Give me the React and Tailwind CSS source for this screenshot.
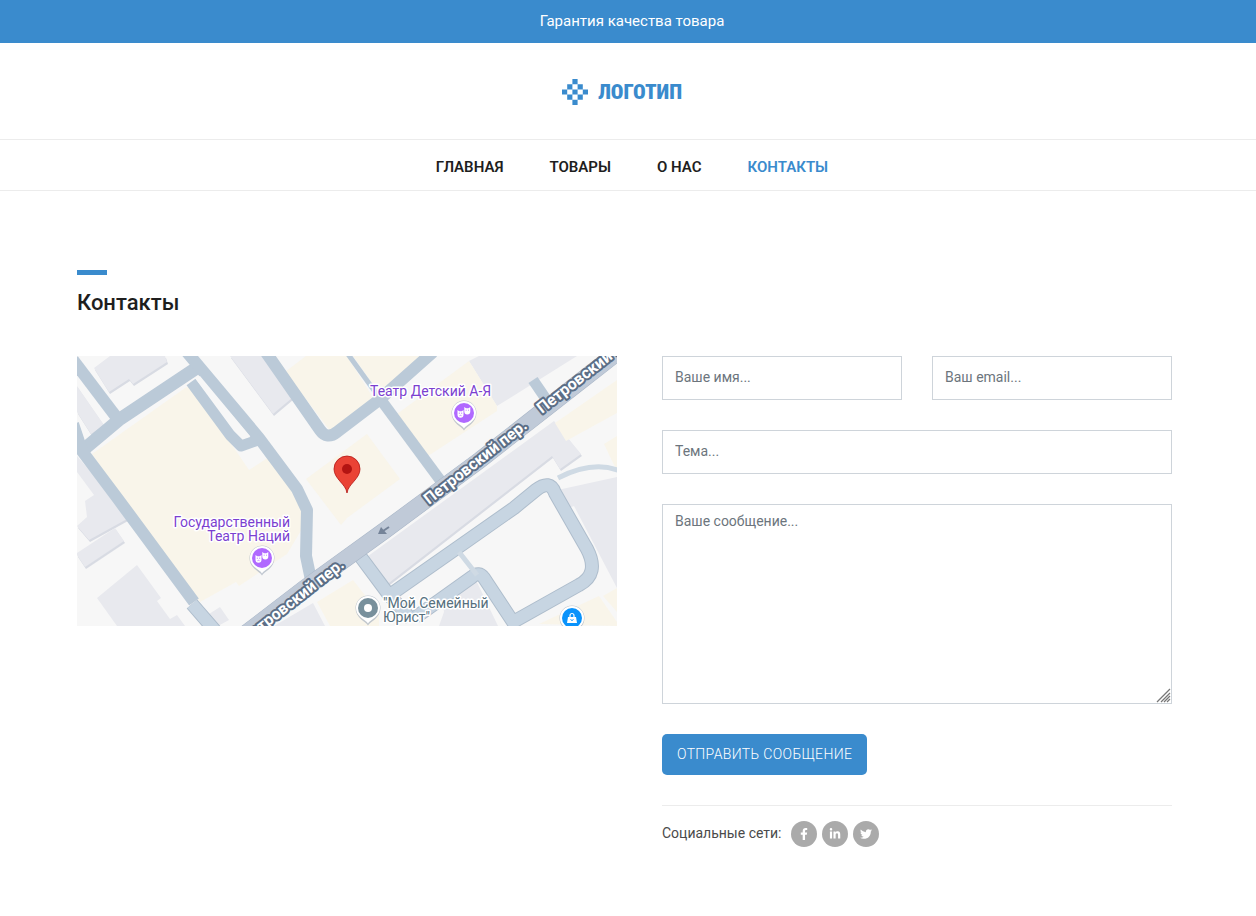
import { FaFacebookF, FaLinkedinIn, FaTwitter } from "react-icons/fa";

const navItems = [
    { label: "ГЛАВНАЯ", href: "#home" },
    { label: "ТОВАРЫ", href: "#products" },
    { label: "О НАС", href: "#about" },
    { label: "КОНТАКТЫ", href: "#contacts", active: true },
];

const socials = [
    { label: "Facebook", href: "#facebook", Icon: FaFacebookF },
    { label: "LinkedIn", href: "#linkedin", Icon: FaLinkedinIn },
    { label: "Twitter", href: "#twitter", Icon: FaTwitter },
];

const fieldClass =
    "block w-full border border-[#ced4da] bg-white px-3 text-sm text-[#495057] placeholder:text-[#6c757d] outline-none focus:border-[#3a8bcd]";

const LogoMark = () => (
    <svg viewBox="0 0 26 26" className="h-[26px] w-[26px]" fill="#3a8bcd" aria-hidden="true">
        <path d="M10.4 0h5.2v5.2h-5.2zM5.2 5.2h5.2v5.2H5.2zM15.6 5.2h5.2v5.2h-5.2zM0 10.4h5.2v5.2H0zM10.4 10.4h5.2v5.2h-5.2zM20.8 10.4H26v5.2h-5.2zM5.2 15.6h5.2v5.2H5.2zM15.6 15.6h5.2v5.2h-5.2zM10.4 20.8h5.2V26h-5.2z" />
    </svg>
);

const PlacePin = ({ x, y, color, children }) => (
    <g transform={`translate(${x} ${y})`}>
        <path d="M0 17.500c-2-4-12.500-7-12.500-17.500a12.500 12.500 0 0 1 25 0c0 10.500-10.500 13.500-12.500 17.500z" fill="#a9b3c0" opacity=".7" />
        <path d="M0 15.500c-2-4-12-6.500-12-15.500a12 12 0 0 1 24 0c0 9-10 11.500-12 15.500z" fill="#fff" />
        <circle r="10" fill={color} />
        {children}
    </g>
);

const Masks = () => (
    <g>
        <path d="M-6.500-3l1.700 1.200h2.600l1.700-1.200v4.800a3 3 0 0 1-6 0z" fill="#fff" />
        <path d="M.300-6l1.700 1.200h2.600l1.700-1.200v4.500a3 3 0 0 1-6 0z" fill="#fff" />
        <path d="M-5.200.200h1.200M-3 .200h1.200M1.700-2.800h1M4-2.800h1M-4.500 2.700q1-.800 2 0" stroke="#b069ff" strokeWidth=".8" fill="none" />
    </g>
);

const StreetName = ({ x, y, rotate }) => (
    <text
        transform={`translate(${x} ${y}) rotate(${rotate})`}
        className="text-[16px] font-bold"
        fill="#fff"
        stroke="#5b6e86"
        strokeWidth="4"
        strokeLinejoin="round"
        paintOrder="stroke"
    >
        Петровский пер.
    </text>
);

const drivewayPath =
    "M278 193l5 7 29 39 22 24M310 241l70-49 57-40 22-18q14-11 19 3l32 56q13 25-8 36l-66 37-29-44q-5-7-12-1l-56 40M115 248l26 30";
const streetPath = "M155 288l73-56 79-57 96-71 97-76 50-39";

const MapView = () => (
    <svg viewBox="0 0 540 270" className="block w-full" role="img" aria-label="Карта проезда">
        <rect width="540" height="270" fill="#f7f7f7" />

        {/* grey buildings */}
        <g fill="#d8dbe3" transform="translate(1 2)">
            <path d="M17 12L33 0h55l2 6-34 22-4-5-20 13zM0 30l27 39-13 9-14-22zM153 0h32l30 42-19 16zM287 203L477 65l27 33-21 15-8-13L308 230zM32 135l18 28-38 21-12-14zM0 197l38-25 9 13-39 26-8-12z" />
        </g>
        <g fill="#e8e9ee">
            <path d="M17 12L33 0h55l2 6-34 22-4-5-20 13zM0 30l27 39-13 9-14-22zM153 0h32l30 42-19 16zM0 100l32 37 18 26-38 21-12-14 10-9-2-16 9-6-17-23z" />
            <path d="M0 197l38-25 9 13-39 26-8-12zM20 242l40-33 24 33-4 3 13 18 7-4 8 11H40zM132 258l11-7 9 13-11 6h-6zM197 270l39-23 12 23z" />
            <path d="M287 203L477 65l27 33-21 15-8-13L308 230zM392 5l10-5h98l-80 50zM476 135l64-14v111l-43-82-10 4zM365 240l32-20 24 50h-59l5-14z" />
        </g>

        {/* theatres and other public buildings */}
        <g fill="#f9f5ea">
            <path d="M15 98L108 32l9-4 30 44v5l25 37 20-13 37 55-5 5 1 12-15 25-48 32-3-4-36 20-12-15-37-48-36-52z" />
            <path d="M208 16l21-16h41l28 45-40 36zM276 0h74l-1 5-47 32zM316 61l76-56 28 45v5l-66 43q-8 5-14-4zM229 123l61-45 33 45-53 39-6 7z" />
            <path d="M478 67l62-43v33l-51 28zM527 88l13-8v34l-4-7zM240 246l36-22 26 33v13h-49zM462 268l60-28 18 26v4zM526 240l14-8v24z" />
        </g>

        {/* paths */}
        <g fill="none" stroke="#bbcad8" strokeLinejoin="round">
            <path d="M-4 4L40 62" strokeWidth="12" />
            <path d="M121 11L43 63 6 94" strokeWidth="13" />
            <path d="M109-5L182 82l38 51 10 21-1 46 5 24" strokeWidth="12" />
            <path d="M114 26l39 53 11 11 20-7" strokeWidth="11" />
            <path d="M-4 68l9 27 36 48 76 103" strokeWidth="12" />
            <path d="M188-5l55 79q7 10 17 2l42-32L356-4" strokeWidth="12" />
            <path d="M268-6l36 50" strokeWidth="5" />
            <path d="M304 44l62 84" strokeWidth="11" />
            <path d="M456 24l15 22" strokeWidth="11" />
        </g>
        <path d="M118 22l5-2 50 60-7 3z" fill="#f7f7f7" />

        {/* driveways */}
        <g fill="none" strokeLinejoin="round">
            <path d={drivewayPath} stroke="#aebdcc" strokeWidth="14" />
            <path d={drivewayPath} stroke="#c7d5e2" strokeWidth="12" />
            <path d="M382 196l18 23M481 122q35-18 62-7" stroke="#cfdae4" strokeWidth="5" />
        </g>

        {/* street */}
        <path d={streetPath} fill="none" stroke="#a9b6c7" strokeWidth="17" />
        <path d={streetPath} fill="none" stroke="#c0cad8" strokeWidth="16" />
        <path d="M312 171l-6 4" fill="none" stroke="#748398" strokeWidth="2" />
        <path d="M301 178l3-7 6 7z" fill="#748398" />
        <StreetName x={352} y={149} rotate={-38} />
        <StreetName x={465} y={58} rotate={-38} />
        <StreetName x={169} y={288} rotate={-38} />

        <g className="text-[14px]" stroke="#fff" strokeWidth="3" strokeLinejoin="round" paintOrder="stroke">
            <text x="293" y="40" fill="#7b3fd0">Театр Детский А-Я</text>
            <g fill="#7b3fd0" textAnchor="end">
                <text x="213" y="171">Государственный</text>
                <text x="213" y="185">Театр Наций</text>
            </g>
            <g fill="#56707d">
                <text x="306" y="252">"Мой Семейный</text>
                <text x="306" y="266">Юрист"</text>
            </g>
        </g>

        <PlacePin x={387} y={57} color="#b069ff"><Masks /></PlacePin>
        <PlacePin x={185} y={202} color="#b069ff"><Masks /></PlacePin>
        <PlacePin x={291} y={252} color="#78909c"><circle r="4" fill="#fff" /></PlacePin>
        <PlacePin x={495} y={262} color="#0a93fb">
            <path d="M-4-1h8l1 6H-5z" fill="#fff" />
            <path d="M-2 0v-2.500a2 2 0 0 1 4 0V0" fill="none" stroke="#fff" strokeWidth="1.2" />
            <path d="M-1.500 1.500q1.500 2 3 0" fill="none" stroke="#0a93fb" />
        </PlacePin>
        <path d="M270 137c-1-9-13-14-13-24a13 13 0 0 1 26 0c0 10-12 15-13 24z" fill="#ea4335" stroke="#b31412" strokeWidth=".8" />
        <circle cx="270" cy="113" r="5" fill="#b31412" />
    </svg>
);

const App = () => (
    <div className="bg-white font-['Roboto',sans-serif] text-[#212529]">
        <div className="bg-[#3a8bcd] pt-[9px] pb-2.5 pl-2 text-center text-[15px] leading-6 text-white">
            Гарантия качества товара
        </div>

        <header>
            <div className="flex h-[97px] items-center justify-center border-b border-[#ececec] pt-0.5">
                <a href="#home" className="mr-3 flex items-center gap-2.5 text-[#3a8bcd]">
                    <LogoMark />
                    <span className="font-['Roboto_Condensed','Roboto',sans-serif] text-[21px] leading-6 font-black">ЛОГОТИП</span>
                </a>
            </div>
            <nav className="border-b border-[#ececec] pl-2">
                <ul className="flex justify-center gap-[46px] pt-[15px] pb-[11px] text-[15px] leading-6 font-semibold">
                    {navItems.map(({ label, href, active }) => (
                        <li key={href}>
                            <a href={href} className={active ? "text-[#3a8bcd]" : "text-[#1e1e1e] hover:text-[#3a8bcd]"}>
                                {label}
                            </a>
                        </li>
                    ))}
                </ul>
            </nav>
        </header>

        <main className="mx-auto max-w-[1102px] pt-[79px] pr-[7px] pb-16">
            <div className="h-[5px] w-[30px] bg-[#3a8bcd]" />
            <h1 className="mt-[13px] mb-[39px] text-[22px] leading-[29px] font-medium text-[#1e1e1e]">Контакты</h1>

            <div className="grid grid-cols-[18fr_17fr] items-start gap-[45px]">
                <MapView />

                <div>
                    <form className="grid grid-cols-2 gap-[30px]" onSubmit={(e) => e.preventDefault()}>
                        <input type="text" aria-label="Ваше имя" placeholder="Ваше имя..." className={`${fieldClass} h-11 pb-0.5`} />
                        <input type="email" aria-label="Ваш email" placeholder="Ваш email..." className={`${fieldClass} h-11 pb-0.5`} />
                        <input type="text" aria-label="Тема" placeholder="Тема..." className={`${fieldClass} col-span-2 h-11 pb-0.5`} />
                        <div className="relative col-span-2">
                            <textarea
                                aria-label="Ваше сообщение"
                                placeholder="Ваше сообщение..."
                                className={`${fieldClass} h-[200px] resize-y py-1.5`}
                            />
                            <svg viewBox="0 0 15 15" className="pointer-events-none absolute right-px bottom-px h-[15px] w-[15px]" aria-hidden="true">
                                <rect width="15" height="15" fill="#fff" />
                                <path d="M1 14L14 1M5 14l9-9M8 14l6-6M11 14l3-3" stroke="#777" strokeWidth="1.3" />
                            </svg>
                        </div>
                        <button
                            type="submit"
                            className="h-[41px] justify-self-start rounded-[5px] bg-[#3a8bcd] px-[15px] pb-0.5 text-sm font-light tracking-wide whitespace-nowrap text-white"
                        >
                            ОТПРАВИТЬ СООБЩЕНИЕ
                        </button>
                    </form>

                    <div className="mt-[30px] flex items-center border-t border-[#ececec] pt-[15px]">
                        <span className="mr-[9px] pb-0.5 text-sm text-[#4a4a4a]">Социальные сети:</span>
                        <ul className="flex gap-[5px]">
                            {socials.map(({ label, href, Icon }) => (
                                <li key={label}>
                                    <a
                                        href={href}
                                        aria-label={label}
                                        className="flex h-[26px] w-[26px] items-center justify-center rounded-full bg-[#aaaaaa] text-white hover:bg-[#3a8bcd]"
                                    >
                                        <Icon className="h-3 w-3" />
                                    </a>
                                </li>
                            ))}
                        </ul>
                    </div>
                </div>
            </div>
        </main>
    </div>
);

export default App;
